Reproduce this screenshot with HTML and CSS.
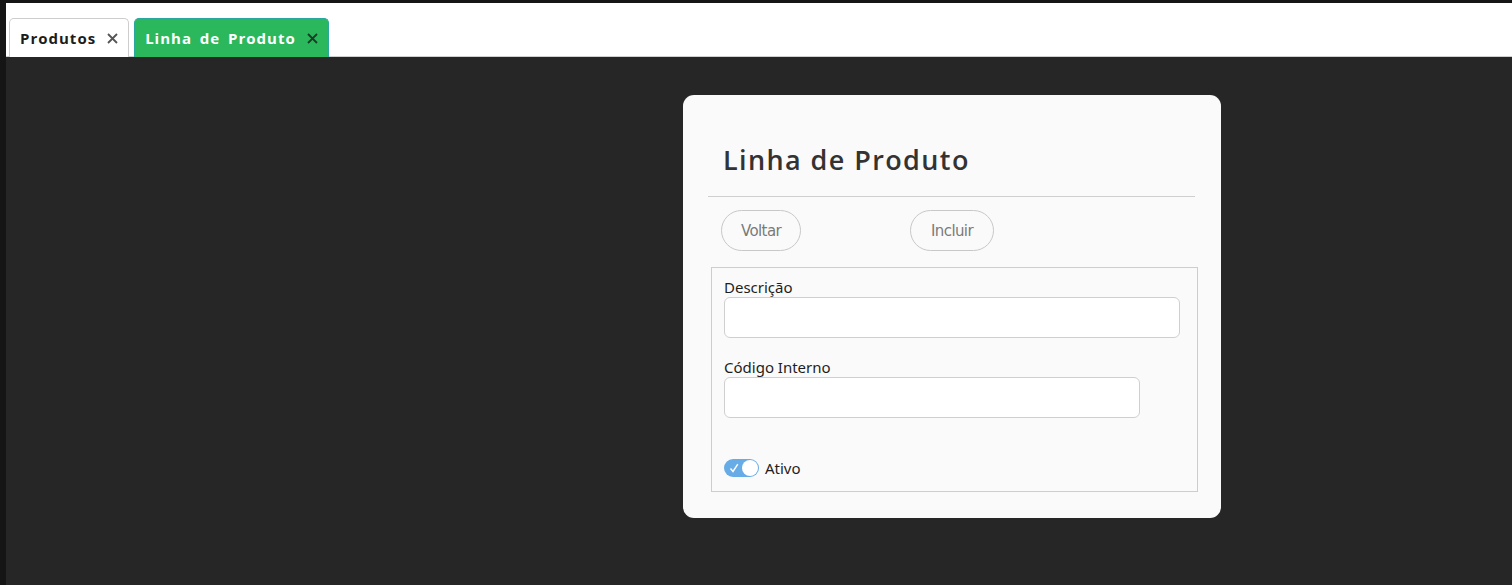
FILE: index.html
```html
<!DOCTYPE html>
<html lang="pt">
<head>
<meta charset="utf-8">
<title>Linha de Produto</title>
<link rel="stylesheet" href="styles.css">
</head>
<body>
<div class="app">
  <div class="tabbar">
    <div class="tab">
      <span class="tab-label">Produtos</span>
      <svg class="tab-close" width="11" height="11" viewBox="0 0 11 11"><path d="M1 1L10 10M10 1L1 10" stroke="currentColor" stroke-width="1.8" fill="none"/></svg>
    </div>
    <div class="tab tab-active">
      <span class="tab-label">Linha de Produto</span>
      <svg class="tab-close" width="11" height="11" viewBox="0 0 11 11"><path d="M1 1L10 10M10 1L1 10" stroke="currentColor" stroke-width="1.8" fill="none"/></svg>
    </div>
  </div>
  <div class="content">
    <div class="card">
      <h1 class="card-title">Linha de Produto</h1>
      <hr class="divider">
      <div class="actions">
        <button class="btn">Voltar</button>
        <button class="btn btn-incluir">Incluir</button>
      </div>
      <div class="fieldset">
        <label class="field-label">Descrição</label>
        <input class="input input-wide" type="text">
        <label class="field-label label-second">Código Interno</label>
        <input class="input input-narrow" type="text">
        <div class="toggle-row">
          <span class="toggle">
            <svg class="toggle-check" width="10" height="10" viewBox="0 0 10 10"><path d="M1.5 5.5L4 8.5L8.8 1.2" stroke="#fff" stroke-width="1.4" fill="none"/></svg>
            <span class="toggle-knob"></span>
          </span>
          <span class="toggle-label">Ativo</span>
        </div>
      </div>
    </div>
  </div>
</div>
</body>
</html>
```
FILE: styles.css
```css
* { box-sizing: border-box; }
html, body { margin: 0; padding: 0; height: 100%; }
body {
  background: #151515;
  font-family: "Noto Sans", "Open Sans", sans-serif;
  overflow: hidden;
}
.app {
  margin-left: 6px;
  padding-top: 3px;
  height: 100%;
  display: flex;
  flex-direction: column;
}
.tabbar {
  background: #fff;
  height: 54px;
  display: flex;
  align-items: flex-end;
  gap: 5px;
  padding-left: 3px;
  border-bottom: 1px solid #cfcfcf;
}
.tab {
  height: 39px;
  margin-bottom: -1px;
  border: 1px solid #cdcdcd;
  border-bottom: none;
  border-radius: 5px 5px 0 0;
  background: #fff;
  display: flex;
  align-items: center;
  padding: 0 10px 0 10px;
  gap: 11px;
  color: #1c1c1c;
}
.tab-label {
  font-family: "Open Sans", "Noto Sans", sans-serif;
  font-weight: 700;
  font-size: 15px;
  letter-spacing: 1px;
  word-spacing: 3px;
}
.tab-close { color: #555; }
.tab-active {
  background: #2bb85c;
  border-color: #2aa8a0;
  color: #fff;
}
.tab-active .tab-close { color: #1d3b28; }
.content {
  flex: 1;
  background: #262626;
  padding-top: 38px;
  padding-left: 677px;
}
.card {
  width: 538px;
  height: 423px;
  background: #fafafa;
  border-radius: 11px;
  padding: 0 26px 0 25px;
}
.card-title {
  margin: 0;
  padding: 47px 0 0 15px;
  font-family: "Open Sans", sans-serif;
  font-weight: 600;
  font-size: 27px;
  line-height: 36px;
  letter-spacing: 1.4px;
  color: #333;
}
.divider {
  margin: 18px 0 0 0;
  border: none;
  border-top: 1px solid #cfcfcf;
  height: 0;
}
.actions {
  display: flex;
  margin-top: 13px;
  padding-left: 13px;
  height: 41px;
}
.btn {
  height: 41px;
  border: 1px solid #c8c8c8;
  border-radius: 21px;
  background: transparent;
  color: #7a7a7a;
  font-family: "DejaVu Sans", sans-serif;
  font-size: 15px;
  letter-spacing: -0.6px;
  padding: 0;
  width: 80px;
}
.btn-incluir {
  margin-left: 109px;
  width: 84px;
}
.fieldset {
  margin: 16px -3px 0 3px;
  border: 1px solid #cdcdcd;
  height: 225px;
  padding: 10px 0 0 12px;
  display: flex;
  flex-direction: column;
  align-items: flex-start;
}
.field-label {
  font-family: "Noto Sans", sans-serif;
  font-size: 15px;
  line-height: 19px;
  color: #1e1e1e;
}
.label-second { margin-top: 20px; }
.input {
  height: 41px;
  border: 1px solid #cfcfcf;
  border-radius: 6px;
  background: #fff;
  outline: none;
}
.input-wide { width: 456px; }
.input-narrow { width: 416px; }
.toggle-row {
  margin-top: 40px;
  display: flex;
  align-items: center;
  gap: 6px;
}
.toggle {
  position: relative;
  width: 35px;
  height: 18px;
  border-radius: 9px;
  background: #67ace6;
  display: inline-block;
}
.toggle-check {
  position: absolute;
  left: 5px;
  top: 4px;
}
.toggle-knob {
  position: absolute;
  right: 1px;
  top: 1px;
  width: 16px;
  height: 16px;
  border-radius: 50%;
  background: #fff;
}
.toggle-label {
  font-family: "Noto Sans", sans-serif;
  font-size: 15px;
  color: #1e1e1e;
}
```
